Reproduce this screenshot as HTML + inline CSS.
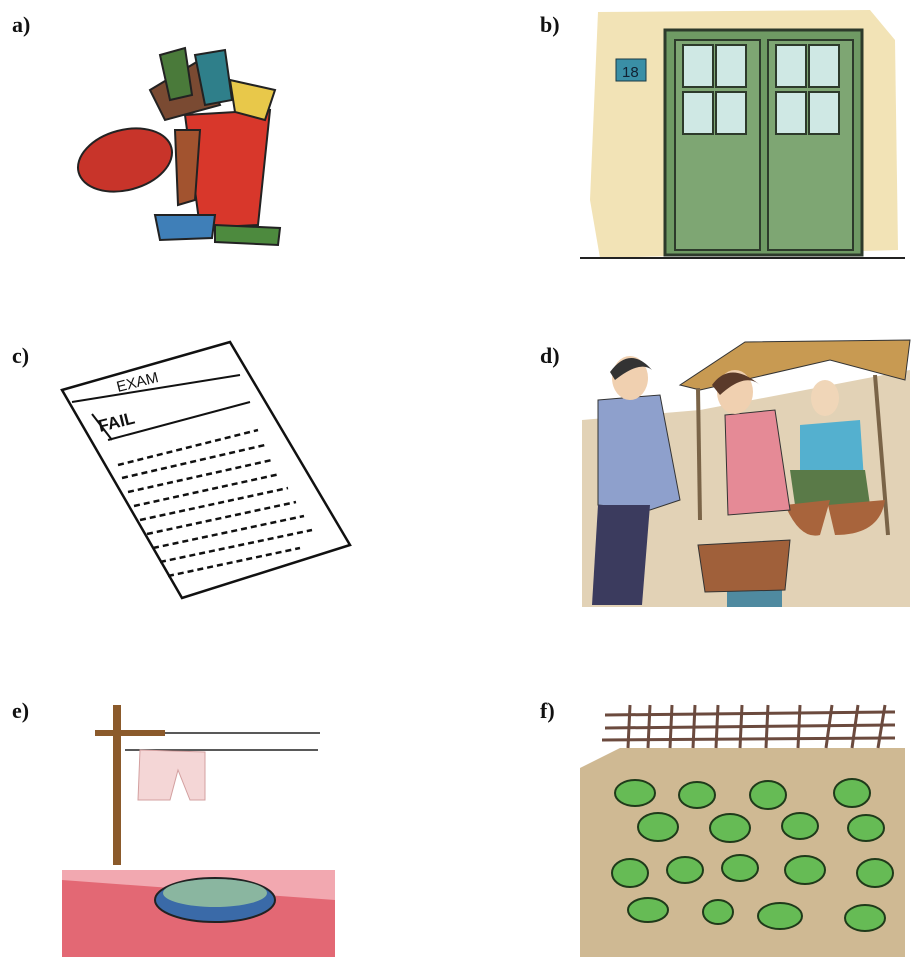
<!DOCTYPE html>
<html><head><meta charset="utf-8"><style>
html,body{margin:0;padding:0;background:#fff;width:920px;height:967px;overflow:hidden}
.l{position:absolute;font:bold 22px "Liberation Serif",serif;color:#111}
svg{position:absolute;left:0;top:0}
</style></head><body>
<svg width="920" height="967" viewBox="0 0 920 967" xmlns="http://www.w3.org/2000/svg">
<!-- a) trash -->
<g stroke="#222" stroke-width="2">
<ellipse cx="125" cy="160" rx="48" ry="30" fill="#c8342a" transform="rotate(-15 125 160)"/>
<path d="M185 115 L270 110 L258 225 L200 228 Z" fill="#d8372b"/>
<path d="M150 90 L200 60 L220 105 L165 120 Z" fill="#7a4a32"/>
<path d="M195 55 L225 50 L232 100 L205 105 Z" fill="#2f7f8a"/>
<path d="M230 80 L275 90 L265 120 L235 112 Z" fill="#e8c84a"/>
<path d="M160 55 L185 48 L192 95 L170 100 Z" fill="#4a7a3a"/>
<path d="M155 215 L215 215 L212 238 L160 240 Z" fill="#3f7fb8"/>
<path d="M215 225 L280 228 L278 245 L215 242 Z" fill="#4d8a3e"/>
<path d="M175 130 L200 130 L195 200 L178 205 Z" fill="#a2532f"/>
</g>
<!-- b) door -->
<path d="M598 12 L870 10 L895 40 L898 250 L600 258 L590 200 Z" fill="#f2e3b6"/>
<rect x="665" y="30" width="197" height="225" fill="#6f9a64" stroke="#2d3a2b" stroke-width="3"/>
<rect x="675" y="40" width="85" height="210" fill="#7ea673" stroke="#2d3a2b" stroke-width="2"/>
<rect x="768" y="40" width="85" height="210" fill="#7ea673" stroke="#2d3a2b" stroke-width="2"/>
<g fill="#cfe8e4" stroke="#2d3a2b" stroke-width="2">
<rect x="683" y="45" width="30" height="42"/><rect x="716" y="45" width="30" height="42"/>
<rect x="683" y="92" width="30" height="42"/><rect x="716" y="92" width="30" height="42"/>
<rect x="776" y="45" width="30" height="42"/><rect x="809" y="45" width="30" height="42"/>
<rect x="776" y="92" width="30" height="42"/><rect x="809" y="92" width="30" height="42"/>
</g>
<rect x="616" y="59" width="30" height="22" fill="#3a8fa6" stroke="#1a3a44"/>
<text x="622" y="77" font-family="Liberation Sans" font-size="15" fill="#123">18</text>
<line x1="580" y1="258" x2="905" y2="258" stroke="#222" stroke-width="2"/>
<!-- c) paper -->
<path d="M62 390 L230 342 L350 545 L182 598 Z" fill="#fff" stroke="#111" stroke-width="2.5"/>
<path d="M72 402 L240 375 M92 414 L112 440 M108 440 L250 402" stroke="#111" stroke-width="2" fill="none"/>
<text x="118" y="392" font-family="Liberation Sans" font-size="15" fill="#111" transform="rotate(-14 118 392)">EXAM</text>
<text x="100" y="432" font-family="Liberation Sans" font-size="17" font-weight="bold" fill="#111" transform="rotate(-14 100 432)">FAIL</text>
<g stroke="#111" stroke-width="2.5" stroke-dasharray="6 4">
<line x1="118" y1="465" x2="258" y2="430"/><line x1="122" y1="478" x2="265" y2="445"/>
<line x1="128" y1="492" x2="272" y2="460"/><line x1="134" y1="506" x2="280" y2="474"/>
<line x1="140" y1="520" x2="288" y2="488"/><line x1="147" y1="534" x2="296" y2="502"/>
<line x1="153" y1="548" x2="304" y2="516"/><line x1="160" y1="562" x2="312" y2="530"/>
<line x1="168" y1="576" x2="300" y2="548"/>
</g>
<!-- d) market -->
<path d="M582 420 L700 410 L910 370 L910 607 L582 607 Z" fill="#e2d2b6"/>
<path d="M680 385 L745 342 L910 340 L905 380 L830 360 L700 390 Z" fill="#c89a52" stroke="#333"/>
<line x1="698" y1="388" x2="700" y2="520" stroke="#7a6448" stroke-width="4"/>
<line x1="875" y1="375" x2="888" y2="535" stroke="#7a6448" stroke-width="4"/>
<path d="M800 425 L860 420 L865 495 L800 500 Z" fill="#54b0cf"/>
<path d="M790 470 L865 470 L870 505 L795 505 Z" fill="#5a7a48"/>
<ellipse cx="825" cy="398" rx="14" ry="18" fill="#f0d6b8"/>
<path d="M785 505 Q800 540 820 535 L830 500 Z" fill="#a8643c"/>
<path d="M828 505 L885 500 Q880 535 835 535 Z" fill="#a8643c"/>
<path d="M598 400 L660 395 L680 500 L650 510 L598 505 Z" fill="#8ea0cc" stroke="#333"/>
<path d="M598 505 L650 505 L642 605 L592 605 Z" fill="#3b3b5e"/>
<ellipse cx="630" cy="378" rx="18" ry="22" fill="#f0d0b0"/>
<path d="M610 372 Q630 345 652 370 Q640 360 615 380 Z" fill="#333"/>
<path d="M725 415 L775 410 L790 510 L728 515 Z" fill="#e58a96" stroke="#333"/>
<ellipse cx="735" cy="392" rx="18" ry="22" fill="#f0d0b0"/>
<path d="M712 385 Q730 360 760 385 Q745 372 720 395 Z" fill="#5a3a2a"/>
<rect x="727" y="560" width="55" height="47" fill="#4f8aa0"/>
<path d="M698 545 L790 540 L785 590 L705 592 Z" fill="#a0603a" stroke="#333"/>
<!-- e) clothesline -->
<path d="M62 870 L335 870 L335 957 L62 957 Z" fill="#e36874"/>
<path d="M62 870 L335 870 L335 900 L62 880 Z" fill="#f2a8b0"/>
<rect x="113" y="705" width="8" height="160" fill="#8b5a2b"/>
<rect x="95" y="730" width="70" height="6" fill="#8b5a2b"/>
<path d="M165 733 L320 733 M125 750 L318 750" stroke="#222" stroke-width="1.5"/>
<path d="M140 750 L205 752 L205 800 L190 800 L178 770 L170 800 L138 800 Z" fill="#f4d6d6" stroke="#d3a0a0"/>
<ellipse cx="215" cy="900" rx="60" ry="22" fill="#3a6aa8" stroke="#222" stroke-width="2"/>
<ellipse cx="215" cy="893" rx="52" ry="14" fill="#8ab6a0"/>
<!-- f) garden -->
<path d="M580 768 L620 748 L905 748 L905 957 L580 957 Z" fill="#cfb993"/>
<g stroke="#6b4a3e" stroke-width="3">
<line x1="605" y1="715" x2="895" y2="712"/><line x1="605" y1="728" x2="895" y2="725"/><line x1="602" y1="740" x2="895" y2="738"/>
<line x1="630" y1="705" x2="628" y2="748"/><line x1="650" y1="705" x2="648" y2="748"/><line x1="672" y1="705" x2="670" y2="748"/>
<line x1="695" y1="705" x2="693" y2="748"/><line x1="718" y1="705" x2="716" y2="748"/><line x1="742" y1="705" x2="740" y2="748"/>
<line x1="768" y1="705" x2="766" y2="748"/><line x1="800" y1="705" x2="798" y2="748"/><line x1="832" y1="705" x2="826" y2="748"/>
<line x1="858" y1="705" x2="852" y2="748"/><line x1="885" y1="705" x2="878" y2="748"/>
</g>
<g fill="#66bb55" stroke="#1f3a1a" stroke-width="2">
<ellipse cx="635" cy="793" rx="20" ry="13"/><ellipse cx="697" cy="795" rx="18" ry="13"/><ellipse cx="768" cy="795" rx="18" ry="14"/><ellipse cx="852" cy="793" rx="18" ry="14"/>
<ellipse cx="658" cy="827" rx="20" ry="14"/><ellipse cx="730" cy="828" rx="20" ry="14"/><ellipse cx="800" cy="826" rx="18" ry="13"/><ellipse cx="866" cy="828" rx="18" ry="13"/>
<ellipse cx="630" cy="873" rx="18" ry="14"/><ellipse cx="685" cy="870" rx="18" ry="13"/><ellipse cx="740" cy="868" rx="18" ry="13"/><ellipse cx="805" cy="870" rx="20" ry="14"/><ellipse cx="875" cy="873" rx="18" ry="14"/>
<ellipse cx="648" cy="910" rx="20" ry="12"/><ellipse cx="718" cy="912" rx="15" ry="12"/><ellipse cx="780" cy="916" rx="22" ry="13"/><ellipse cx="865" cy="918" rx="20" ry="13"/>
</g>
</svg>
<div class="l" style="left:12px;top:12px">a)</div>
<div class="l" style="left:540px;top:12px">b)</div>
<div class="l" style="left:12px;top:343px">c)</div>
<div class="l" style="left:540px;top:343px">d)</div>
<div class="l" style="left:12px;top:698px">e)</div>
<div class="l" style="left:540px;top:698px">f)</div>
</body></html>
